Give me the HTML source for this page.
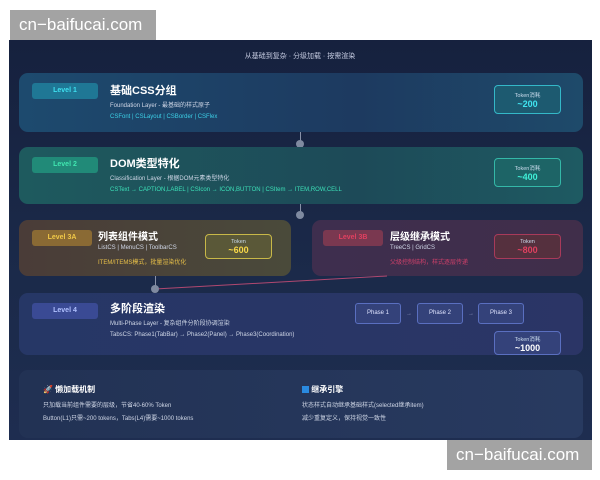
<!DOCTYPE html>
<html><head><meta charset="utf-8"><style>
*{margin:0;padding:0;box-sizing:border-box}
body{width:600px;height:480px;background:#fff;position:relative;overflow:hidden;font-family:"Liberation Sans","Noto Sans CJK SC",sans-serif;color:#fff}
.wm{position:absolute;background:#a3a3a3;color:#fff;font-size:17px;line-height:30px;padding:0 9px;}
.panel{position:absolute;left:9px;top:40px;width:583px;height:400px;background:linear-gradient(180deg,#16213e 0%,#1b2a4a 60%,#1e2d50 100%)}
.card{position:absolute;border-radius:9px}
.badge{position:absolute;font-size:7px;font-weight:bold;text-align:center;line-height:16px;height:16px;width:66px;border-radius:3px}
.t{position:absolute;font-size:11px;font-weight:bold}
.s{position:absolute;font-size:6px;color:#cfd6e6;white-space:nowrap}
.tok{position:absolute;border-radius:4px;text-align:center;font-size:5.5px;color:#cde}
.tok b{display:block;font-size:9px}
.dot{position:absolute;width:8px;height:8px;border-radius:50%;background:#7f8aa0}
.vl{position:absolute;width:1px;background:#8891a8}
.ph{position:absolute;top:303px;width:46px;height:21px;border:1px solid #5a6fc0;background:#34427a;border-radius:3px;font-size:6px;text-align:center;line-height:19px;color:#dfe4ff}
</style></head><body>
<div class="wm" style="left:10px;top:10px;width:146px">cn−baifucai.com</div>
<div class="panel"></div>
<div style="position:absolute;left:0;width:600px;top:51px;text-align:center;font-size:7px;color:#c4cbe0">从基础到复杂 · 分级加载 · 按需渲染</div>

<div class="card" style="left:19px;top:73px;width:564px;height:59px;background:linear-gradient(90deg,#1d4a6e,#1d3a60 60%,#1e4a6a)"></div>
<div class="badge" style="left:32px;top:83px;background:#1f7795;color:#3ee0f0">Level 1</div>
<div class="t" style="left:110px;top:82px">基础CSS分组</div>
<div class="s" style="left:110px;top:100px">Foundation Layer - 最基础的样式原子</div>
<div class="s" style="left:110px;top:114px;color:#3ccfe6">CSFont | CSLayout | CSBorder | CSFlex</div>
<div class="tok" style="left:494px;top:85px;width:67px;height:29px;border:1px solid #34b8c8;background:#1d5a70;padding-top:5px">Token消耗<b style="color:#40e4f0">~200</b></div>

<div class="vl" style="left:300px;top:132px;height:15px"></div><div class="dot" style="left:296px;top:140px"></div>

<div class="card" style="left:19px;top:147px;width:564px;height:57px;background:linear-gradient(90deg,#1e5a5e,#1d4a58 60%,#1e5a62)"></div>
<div class="badge" style="left:32px;top:157px;background:#218a78;color:#40e6b0">Level 2</div>
<div class="t" style="left:110px;top:155px">DOM类型特化</div>
<div class="s" style="left:110px;top:173px">Classification Layer - 根据DOM元素类型特化</div>
<div class="s" style="left:110px;top:187px;color:#3ce0b8">CSText → CAPTION,LABEL | CSIcon → ICON,BUTTON | CSItem → ITEM,ROW,CELL</div>
<div class="tok" style="left:494px;top:158px;width:67px;height:29px;border:1px solid #34b8a8;background:#1d6466;padding-top:5px">Token消耗<b style="color:#40f0d8">~400</b></div>

<div class="vl" style="left:300px;top:204px;height:12px"></div><div class="dot" style="left:296px;top:211px"></div>

<div class="card" style="left:19px;top:220px;width:272px;height:56px;background:linear-gradient(90deg,#4a3c38,#4a4a3a)"></div>
<div class="badge" style="left:32px;top:230px;width:60px;background:#8a6a34;color:#f0c848">Level 3A</div>
<div class="t" style="left:98px;top:228px;font-size:10px">列表组件模式</div>
<div class="s" style="left:98px;top:245px">ListCS | MenuCS | ToolbarCS</div>
<div class="s" style="left:98px;top:257px;color:#e8c048">ITEM/ITEMS模式，批量渲染优化</div>
<div class="tok" style="left:205px;top:234px;width:67px;height:25px;border:1px solid #c8b848;background:#5a5838;padding-top:4px">Token<b style="color:#f8d848">~600</b></div>

<div class="card" style="left:312px;top:220px;width:271px;height:56px;background:linear-gradient(90deg,#3e2e4e,#402e4a)"></div>
<div class="badge" style="left:323px;top:230px;width:60px;background:#7a3850;color:#e04060">Level 3B</div>
<div class="t" style="left:390px;top:228px;font-size:10px">层级继承模式</div>
<div class="s" style="left:390px;top:245px">TreeCS | GridCS</div>
<div class="s" style="left:390px;top:257px;color:#d0406a">父级控制结构，样式逐层传递</div>
<div class="tok" style="left:494px;top:234px;width:67px;height:25px;border:1px solid #a83a5a;background:#55303e;padding-top:4px">Token<b style="color:#e04060">~800</b></div>

<div class="card" style="left:19px;top:293px;width:564px;height:62px;background:linear-gradient(90deg,#263766,#2b3566)"></div>
<svg style="position:absolute;left:0;top:0" width="600" height="480"><line x1="155" y1="289" x2="387" y2="276" stroke="#b04870" stroke-width="1"/></svg>
<div class="vl" style="left:155px;top:276px;height:12px"></div><div class="dot" style="left:151px;top:285px"></div>
<div class="badge" style="left:32px;top:303px;background:#3a4a94;color:#b0c0ff">Level 4</div>
<div class="t" style="left:110px;top:300px">多阶段渲染</div>
<div class="s" style="left:110px;top:318px">Multi-Phase Layer - 复杂组件分阶段协调渲染</div>
<div class="s" style="left:110px;top:332px">TabsCS: Phase1(TabBar) → Phase2(Panel) → Phase3(Coordination)</div>
<div class="ph" style="left:355px">Phase 1</div><div class="s" style="left:406px;top:311px;color:#8890b8">→</div>
<div class="ph" style="left:417px">Phase 2</div><div class="s" style="left:468px;top:311px;color:#8890b8">→</div>
<div class="ph" style="left:478px">Phase 3</div>
<div class="tok" style="left:494px;top:331px;width:67px;height:24px;border:1px solid #5a6fc0;background:#34427a;padding-top:3px">Token消耗<b style="color:#fff">~1000</b></div>

<div class="card" style="left:19px;top:370px;width:564px;height:68px;background:linear-gradient(90deg,#223254,#283a60)"></div>
<div class="t" style="left:43px;top:384px;font-size:8px">🚀 懒加载机制</div>
<div class="s" style="left:43px;top:400px">只加载当前组件需要的层级，节省40-60% Token</div>
<div class="s" style="left:43px;top:413px">Button(L1)只需~200 tokens，Tabs(L4)需要~1000 tokens</div>
<div class="t" style="left:302px;top:384px;font-size:8px"><span style="display:inline-block;width:7px;height:7px;background:#2a8ae0;vertical-align:-1px"></span> 继承引擎</div>
<div class="s" style="left:302px;top:400px">状态样式自动继承基础样式(selected继承item)</div>
<div class="s" style="left:302px;top:413px">减少重复定义，保持视觉一致性</div>

<div class="wm" style="left:447px;top:440px;width:145px">cn−baifucai.com</div>
</body></html>
